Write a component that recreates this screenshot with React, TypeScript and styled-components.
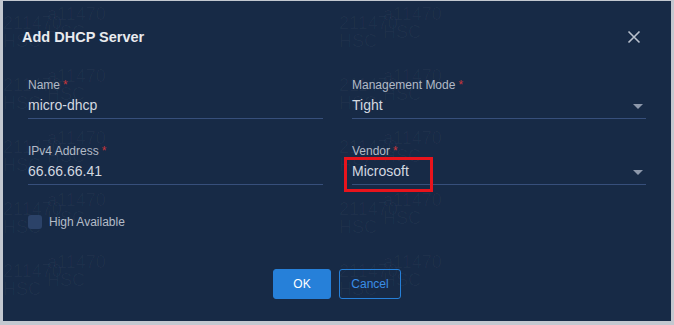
import React from "react";
import styled, { createGlobalStyle } from "styled-components";

const GlobalStyle = createGlobalStyle`
  html, body {
    margin: 0;
    padding: 0;
    background: #c3c8d0;
    font-family: "Liberation Sans", Arial, sans-serif;
  }
  * { box-sizing: border-box; }
`;

const Page = styled.div`
  width: 674px;
  height: 325px;
  padding: 1px 3px 4px 3px;
  background: #c3c8d0;
`;

const Dialog = styled.div`
  position: relative;
  width: 668px;
  height: 320px;
  background: #172a46;
  display: flex;
  flex-direction: column;
  overflow: hidden;
`;

// faint repeated watermark behind the dialog content
const Watermark = styled.div`
  position: absolute;
  inset: 0;
  display: grid;
  grid-template-columns: repeat(2, 336px);
  grid-auto-rows: 62px;
  padding-top: 4px;
  pointer-events: none;
  z-index: 0;
`;

const Tile = styled.div`
  display: grid;
`;

const Stack = styled.div<{ shifted?: boolean }>`
  grid-area: 1 / 1;
  display: flex;
  flex-direction: column;
  margin-left: ${(p) => (p.shifted ? "44px" : "0")};
  margin-top: ${(p) => (p.shifted ? "0" : "9px")};
  font-family: "Liberation Sans", Arial, sans-serif;
  font-size: 18px;
  line-height: 18px;
  color: rgba(255, 255, 255, 0.03);
`;

const Header = styled.div`
  position: relative;
  z-index: 1;
  height: 72px;
  display: flex;
  align-items: center;
  justify-content: space-between;
  padding: 0 30px 0 19px;
`;

const Title = styled.h2`
  margin: 0;
  font-size: 14.5px;
  font-weight: bold;
  color: #e9ebef;
`;

const Close = styled.button`
  border: none;
  background: transparent;
  padding: 0;
  width: 14px;
  height: 14px;
  display: flex;
  cursor: pointer;
`;

const Form = styled.div`
  position: relative;
  z-index: 1;
  display: grid;
  grid-template-columns: 295px 294px;
  column-gap: 29px;
  padding: 4px 25px 0 25px;
`;

const Field = styled.div`
  display: flex;
  flex-direction: column;
  margin-bottom: 24px;
  position: relative;
`;

const Label = styled.label`
  font-size: 12px;
  line-height: 16px;
  color: #b2bac6;
  margin-bottom: 2px;
`;

const Req = styled.span`
  color: #c9363a;
  margin-left: 3px;
`;

const Input = styled.div<{ select?: boolean }>`
  height: 24px;
  border-bottom: 1px solid #374f7b;
  font-size: 14px;
  line-height: 20px;
  color: #d3d8e0;
  display: flex;
  justify-content: space-between;
  padding-right: ${(p) => (p.select ? "3px" : "0")};
`;

const Caret = styled.span`
  width: 0;
  height: 0;
  margin-top: 9px;
  border-left: 5px solid transparent;
  border-right: 5px solid transparent;
  border-top: 5px solid #8d98ab;
`;

const Highlight = styled.div`
  position: absolute;
  left: -8px;
  top: 14px;
  width: 89px;
  height: 35px;
  border: 3px solid #e8141c;
`;

const CheckRow = styled.div`
  position: relative;
  z-index: 1;
  display: flex;
  align-items: center;
  gap: 7px;
  padding: 6px 25px 0 25px;
`;

const Box = styled.span`
  width: 14px;
  height: 14px;
  border-radius: 3px;
  background: #2b4268;
`;

const CheckLabel = styled.span`
  font-size: 12px;
  color: #b4bcc8;
`;

const Footer = styled.div`
  position: relative;
  z-index: 1;
  display: flex;
  justify-content: center;
  gap: 8px;
  margin-top: 40px;
`;

const Button = styled.button<{ primary?: boolean }>`
  height: 30px;
  min-width: ${(p) => (p.primary ? "58px" : "62px")};
  border-radius: 3px;
  font-family: "Liberation Sans", Arial, sans-serif;
  font-size: 12px;
  cursor: pointer;
  border: 1px solid #2680d9;
  background: ${(p) => (p.primary ? "#2680d9" : "transparent")};
  color: ${(p) => (p.primary ? "#ffffff" : "#3a8ee6")};
`;

const tiles = Array.from({ length: 10 }, (_, i) => i);

export default function App() {
  return (
    <>
      <GlobalStyle />
      <Page>
        <Dialog>
          <Watermark aria-hidden>
            {tiles.map((i) => (
              <Tile key={i}>
                <Stack shifted>
                  <span>a11470</span>
                  <span>HSC</span>
                </Stack>
                <Stack>
                  <span>211470</span>
                  <span>HSC</span>
                </Stack>
              </Tile>
            ))}
          </Watermark>
          <Header>
            <Title>Add DHCP Server</Title>
            <Close aria-label="close">
              <svg width="14" height="14" viewBox="0 0 14 14">
                <path d="M1.5 1.5 L12.5 12.5 M12.5 1.5 L1.5 12.5" stroke="#b9c1cd" strokeWidth="1.6" />
              </svg>
            </Close>
          </Header>
          <Form>
            <Field>
              <Label>
                Name<Req>*</Req>
              </Label>
              <Input>micro-dhcp</Input>
            </Field>
            <Field>
              <Label>
                Management Mode<Req>*</Req>
              </Label>
              <Input select>
                Tight
                <Caret />
              </Input>
            </Field>
            <Field>
              <Label>
                IPv4 Address<Req>*</Req>
              </Label>
              <Input>66.66.66.41</Input>
            </Field>
            <Field>
              <Label>
                Vendor<Req>*</Req>
              </Label>
              <Input select>
                Microsoft
                <Caret />
              </Input>
              <Highlight />
            </Field>
          </Form>
          <CheckRow>
            <Box />
            <CheckLabel>High Available</CheckLabel>
          </CheckRow>
          <Footer>
            <Button primary>OK</Button>
            <Button>Cancel</Button>
          </Footer>
        </Dialog>
      </Page>
    </>
  );
}
